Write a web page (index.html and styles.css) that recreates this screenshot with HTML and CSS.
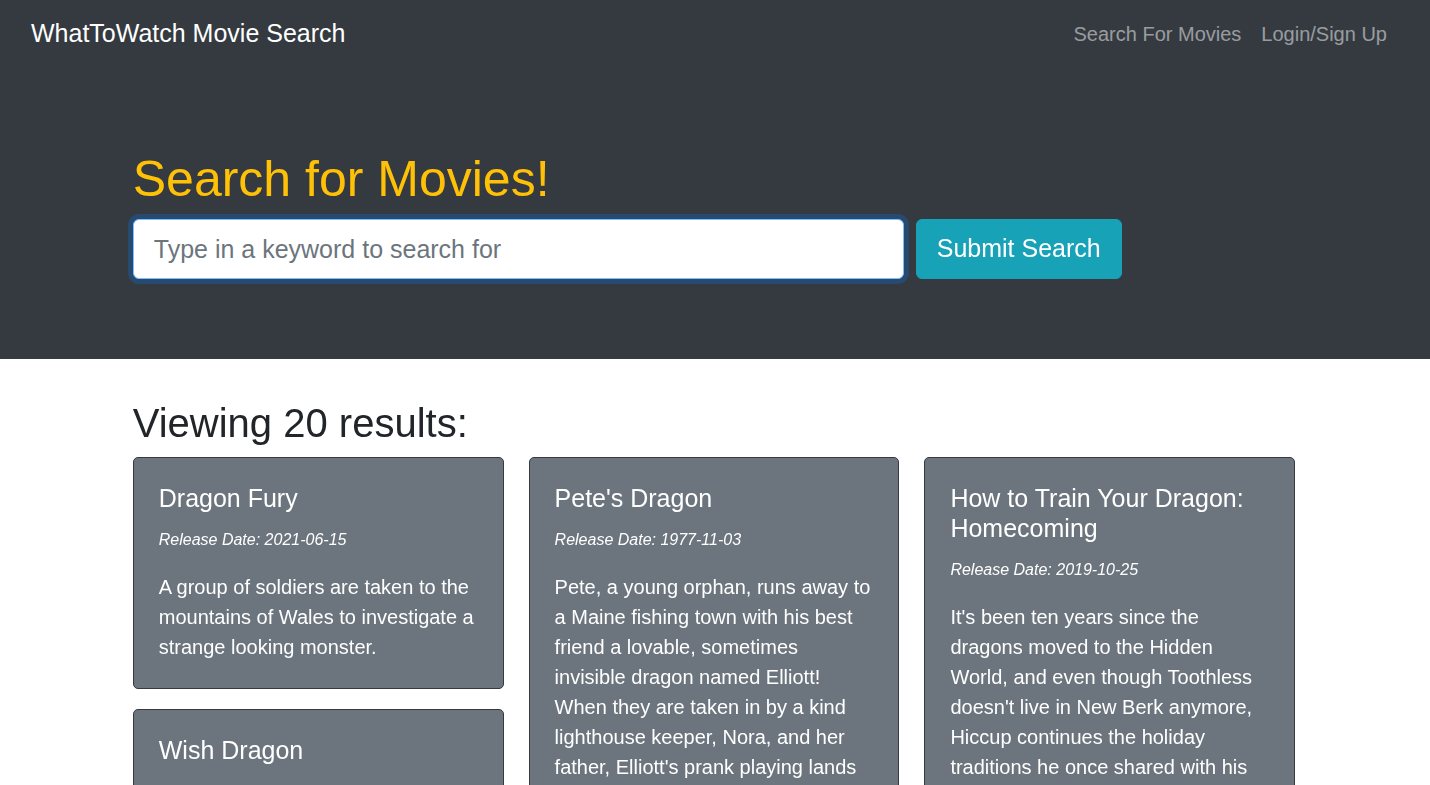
FILE: index.html
```html
<!DOCTYPE html>
<html lang="en">
<head>
<meta charset="utf-8">
<title>WhatToWatch Movie Search</title>
<link rel="stylesheet" href="styles.css">
</head>
<body>
<nav class="navbar">
  <a class="brand" href="#">WhatToWatch Movie Search</a>
  <div class="nav-links">
    <a class="nav-link" href="#">Search For Movies</a>
    <a class="nav-link" href="#">Login/Sign Up</a>
  </div>
</nav>
<header class="jumbotron">
  <div class="container">
    <h1 class="hero-title">Search for Movies!</h1>
    <form class="search-form">
      <input class="search-input focused" type="text" placeholder="Type in a keyword to search for" autofocus>
      <button class="search-btn" type="button">Submit Search</button>
    </form>
  </div>
</header>
<main class="container results">
  <h2 class="results-title">Viewing 20 results:</h2>
  <div class="card-grid">
    <div class="card-col">
      <div class="card">
        <h5 class="card-title">Dragon Fury</h5>
        <p class="card-date">Release Date: 2021-06-15</p>
        <p class="card-text">A group of soldiers are taken to the mountains of Wales to investigate a strange looking monster.</p>
      </div>
      <div class="card">
        <h5 class="card-title">Wish Dragon</h5>
        <p class="card-date">Release Date: 2021-01-15</p>
        <p class="card-text">Determined teen Din is longing to reconnect with his childhood best friend when he meets a wish-granting dragon who shows him the magic of possibilities.</p>
      </div>
    </div>
    <div class="card-col">
      <div class="card">
        <h5 class="card-title">Pete's Dragon</h5>
        <p class="card-date">Release Date: 1977-11-03</p>
        <p class="card-text">Pete, a young orphan, runs away to a Maine fishing town with his best friend a lovable, sometimes invisible dragon named Elliott! When they are taken in by a kind lighthouse keeper, Nora, and her father, Elliott's prank playing lands Pete in trouble with the town.</p>
      </div>
    </div>
    <div class="card-col">
      <div class="card">
        <h5 class="card-title">How to Train Your Dragon: Homecoming</h5>
        <p class="card-date">Release Date: 2019-10-25</p>
        <p class="card-text">It's been ten years since the dragons moved to the Hidden World, and even though Toothless doesn't live in New Berk anymore, Hiccup continues the holiday traditions he once shared with his best friend.</p>
      </div>
    </div>
  </div>
</main>
</body>
</html>
```
FILE: styles.css
```css
* { box-sizing: border-box; }

body {
  margin: 0;
  font-family: "Liberation Sans", Arial, sans-serif;
  font-size: 20px;
  line-height: 1.5;
  color: #212529;
  background: #fff;
}

.navbar {
  display: flex;
  justify-content: space-between;
  align-items: center;
  padding: 9px 33px 10px 31px;
  background: #343a40;
}

.brand {
  font-size: 25px;
  line-height: 37.5px;
  padding: 6.25px 0;
  color: #fff;
  text-decoration: none;
}

.nav-links {
  display: flex;
}

.nav-link {
  font-size: 20px;
  line-height: 30px;
  padding: 10px;
  color: rgba(255, 255, 255, 0.5);
  text-decoration: none;
}

.container {
  width: 1200px;
  margin: 0 auto;
  padding: 0 19.75px 0 17.75px;
}

.jumbotron {
  background: #343a40;
  padding: 80px 0;
}

.hero-title {
  margin: 0 0 10px;
  font-size: 50px;
  font-weight: 500;
  line-height: 1.2;
  color: #ffc107;
}

.search-form {
  display: flex;
  gap: 12px;
}

.search-input {
  width: 771px;
  height: 60px;
  padding: 10px 20px;
  font-family: inherit;
  font-size: 25px;
  line-height: 1.5;
  color: #495057;
  background: #fff;
  border: 1px solid #ced4da;
  border-radius: 6px;
  outline: none;
}

.search-input.focused {
  border-color: #80bdff;
  box-shadow: 0 0 0 5px rgba(0, 123, 255, 0.25);
}

.search-input::placeholder {
  color: #6c757d;
  opacity: 1;
}

.search-btn {
  height: 60px;
  padding: 10px 20px;
  font-family: inherit;
  font-size: 25px;
  line-height: 1.5;
  color: #fff;
  background: #17a2b8;
  border: 1px solid #17a2b8;
  border-radius: 6px;
}

.results {
  margin-top: 40px;
}

.results-title {
  margin: 0 0 10px;
  font-size: 40px;
  font-weight: 500;
  line-height: 1.2;
}

.card-grid {
  display: grid;
  grid-template-columns: repeat(3, 1fr);
  column-gap: 25px;
}

.card-col {
  display: flex;
  flex-direction: column;
  gap: 20px;
}

.card {
  padding: 25px 25px 26px;
  background: #6c757d;
  border: 1px solid #343a40;
  border-radius: 5px;
  color: #fff;
}

.card-title {
  margin: 0 0 15px;
  font-size: 25px;
  font-weight: 500;
  line-height: 1.2;
}

.card-date {
  margin: 0 0 20px;
  font-size: 16px;
  line-height: 24px;
  font-style: italic;
}

.card-text {
  margin: 0;
  font-size: 20px;
  line-height: 30px;
}
```
